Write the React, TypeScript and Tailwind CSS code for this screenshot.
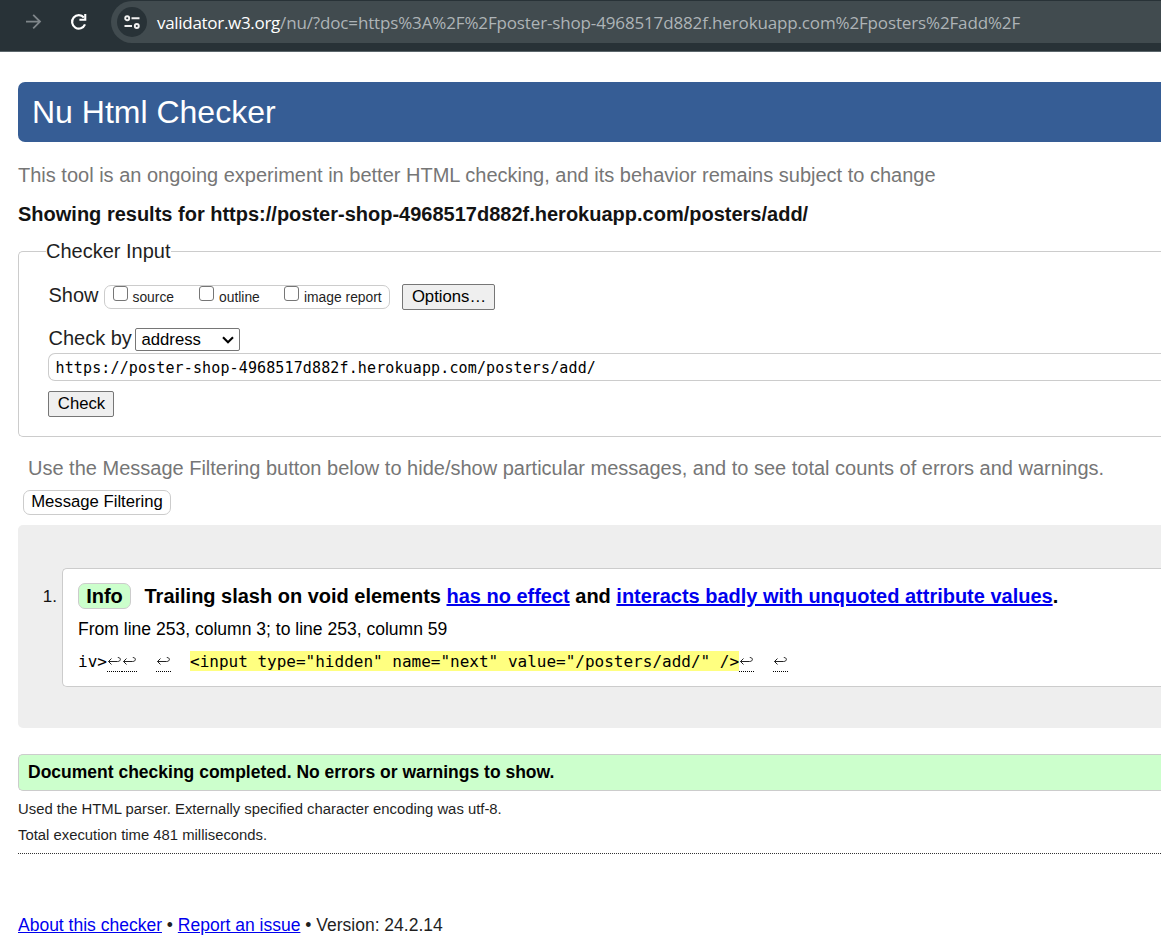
import React from "react";

function Return() {
  return (
    <span className="flex h-[21px] w-[15px] shrink-0 items-start justify-center border-b border-dotted border-black pt-[5px]" title="newline">
      <svg width="15" height="10" viewBox="0 0 15 10" fill="none" stroke="#222" strokeWidth="1">
        <path d="M4.5 2.5 L1.5 5.5 L4.5 8.5 M1.5 5.5 H10.5 C14.3 5.5 14.3 1.5 10.8 1.5" />
      </svg>
    </span>
  );
}

function Check({ label, className }: { label: string; className: string }) {
  return (
    <label className={`flex shrink-0 ${className}`}>
      <input type="checkbox" className="mt-0 mr-[5px] h-[15px] w-[15px] shrink-0 appearance-none rounded-[3px] border-[1.5px] border-[#767676] bg-white" />
      <span className="pt-[1px] text-[13.85px] leading-[20px]">{label}</span>
    </label>
  );
}

export default function App() {
  return (
    <div className="h-[942px] w-full overflow-hidden bg-white font-['Liberation_Sans',Arial,sans-serif] text-[#1f1f1f] whitespace-nowrap">
      <header className="flex h-[52px] items-start border-b border-[#5b666b] bg-[#283237] pt-px">
        <svg className="mt-[12px] ml-[24px] h-[18px] w-[18px] shrink-0" viewBox="0 0 18 18" fill="none" stroke="#7f868a" strokeWidth="1.8">
          <path d="M2 8.6 H16 M9.2 1.8 L16 8.6 L9.2 15.4" />
        </svg>
        <svg className="mt-[12px] ml-[28px] h-[18px] w-[18px] shrink-0" viewBox="0 0 18 18" fill="none" stroke="#fff" strokeWidth="2.2">
          <path d="M15 11.4 A6.7 6.7 0 1 1 13.9 4.5" />
          <path d="M16.3 1 V7.8 H9.4 V5.7 H14.2 V1 Z" fill="#fff" stroke="none" />
        </svg>
        <div className="ml-[23px] flex h-[42px] flex-1 items-center rounded-l-full bg-[#414b4f] pl-[6px]">
          <div className="flex h-[30px] w-[30px] shrink-0 items-center justify-center rounded-full bg-[#283237]">
            <svg width="16" height="16" viewBox="0 0 16 16" fill="none" stroke="#f1f1f1" strokeWidth="1.9">
              <circle cx="3.2" cy="4.2" r="2" />
              <path d="M7.5 4.2 H15.5 M0.5 12 H8" />
              <circle cx="12.8" cy="12" r="2" />
            </svg>
          </div>
          <div className="mt-[2px] ml-[10px] font-['Open_Sans','Noto_Sans',sans-serif] text-[17px] leading-[24px] text-[#aeb4b7]">
            <span className="tracking-[-0.3px] text-white">validator.w3.org</span>
            <span className="tracking-[-0.145px]">/nu/?doc=https%3A%2F%2Fposter-shop-4968517d882f.herokuapp.com%2Fposters%2Fadd%2F</span>
          </div>
        </div>
      </header>
      <main className="pt-[30px] pl-[18px]">
        <h1 className="h-[60px] rounded-l-[7px] bg-[#365d95] pl-[14px] text-[32px] leading-[60px] text-white">Nu Html Checker</h1>
        <p className="mt-[20px] h-[26px] text-[20px] leading-[26px] text-[#767676]">This tool is an ongoing experiment in better HTML checking, and its behavior remains subject to change</p>
        <h2 className="mt-[13px] h-[26px] text-[20px] leading-[26px] font-bold text-[#131313]">Showing results for https://poster-shop-4968517d882f.herokuapp.com/posters/add/</h2>
        <fieldset className="mt-[11px] h-[199px] rounded-l-[5px] border border-r-0 border-[#ccc] pl-[29px]">
          <legend className="-ml-[2px] h-[26px] text-[20px] leading-[26px]">Checker Input</legend>
          <div className="mt-[20px] flex h-[26px]">
            <span className="w-[56px] shrink-0 pl-[0.5px] text-[20px] leading-[22px]">Show</span>
            <div className="mt-px flex h-[24px] w-[286px] shrink-0 rounded-[7px] border border-[#ccc] pl-[7.5px]">
              <Check label="source" className="w-[86.5px]" />
              <Check label="outline" className="w-[85px]" />
              <Check label="image report" className="w-[100px]" />
            </div>
            <button className="ml-[12px] h-[26px] w-[93px] shrink-0 rounded-[2px] border border-[#767676] bg-[#efefef] pl-px text-[16.7px] leading-[24px] text-black">Options…</button>
          </div>
          <div className="mt-[18px] flex h-[23px]">
            <span className="w-[87px] shrink-0 pl-[0.5px] text-[20px] leading-[20px]">Check by</span>
            <div className="flex h-[23px] w-[105px] shrink-0 items-center justify-between rounded-[2px] border border-[#767676] pr-[5px] pl-[5.5px] text-[16.7px] leading-[21px] text-black">
              <span>address</span>
              <svg width="12" height="8" viewBox="0 0 12 8" fill="none" stroke="#000" strokeWidth="2.1"><path d="M1 1.2 L6 6.2 L11 1.2" /></svg>
            </div>
          </div>
          <div className="mt-[2px] h-[28px] rounded-l-[7px] border border-r-0 border-[#ccc] pl-[6.5px] font-['DejaVu_Sans_Mono',monospace] text-[15px] leading-[29px] tracking-[0.13px] text-black">https://poster-shop-4968517d882f.herokuapp.com/posters/add/</div>
          <button className="mt-[10px] block h-[26px] w-[66px] rounded-[2px] border border-[#767676] bg-[#efefef] pb-px pl-px text-[16.7px] leading-[22px] text-black">Check</button>
        </fieldset>
        <p className="mt-[18px] h-[26px] pl-[10px] text-[20px] leading-[26px] text-[#767676]">Use the Message Filtering button below to hide/show particular messages, and to see total counts of errors and warnings.</p>
        <button className="mt-[9px] ml-[5px] block h-[25px] w-[148px] rounded-[7px] border border-[#ccc] bg-white pb-[2px] text-[16.7px] leading-[21px] text-black">Message Filtering</button>
        <section className="mt-[10px] flex h-[203px] rounded-l-[5px] bg-[#eee] pt-[43px]">
          <span className="w-[44px] shrink-0 pt-[17px] pr-[5px] text-right text-[17px] leading-[24px] text-[#131313]">1.</span>
          <div className="h-[119px] flex-1 rounded-l-[5px] border border-r-0 border-[#ccc] bg-white pt-[14px] pl-[15px] text-black">
            <p className="flex h-[26px] text-[20px] leading-[24px] font-bold">
              <span className="mr-[13.5px] w-[53px] shrink-0 rounded-[7px] border border-[#ccc] bg-[#cfc] text-center">Info</span>
              <span className="leading-[26px] tracking-[-0.01px]">Trailing slash on void elements <a className="text-[#00e] underline">has no effect</a> and <a className="text-[#00e] underline">interacts badly with unquoted attribute values</a>.</span>
            </p>
            <p className="mt-[8px] h-[24px] text-[17.55px] leading-[24px]">From line 253, column 3; to line 253, column 59</p>
            <p className="mt-[10px] flex h-[20px] font-['DejaVu_Sans_Mono',monospace] text-[16px] leading-[22px] whitespace-pre">
              <span className="w-[29px] shrink-0">iv&gt;</span>
              <Return /><Return />
              <span className="w-[19px] shrink-0" />
              <Return />
              <span className="w-[19px] shrink-0" />
              <mark className="w-[549px] shrink-0 bg-[#ffff80]">{'<input type="hidden" name="next" value="/posters/add/" />'}</mark>
              <Return />
              <span className="w-[19px] shrink-0" />
              <Return />
            </p>
          </div>
        </section>
        <p className="mt-[26px] h-[37px] rounded-l-[5px] border border-r-0 border-[#ccc] bg-[#cfc] pl-[9px] text-[17.5px] leading-[34px] font-bold text-black">Document checking completed. No errors or warnings to show.</p>
        <p className="mt-[5px] h-[26px] text-[14.85px] leading-[26px]">Used the HTML parser. Externally specified character encoding was utf-8.</p>
        <p className="h-[32px] border-b border-dotted border-[#333] text-[14.85px] leading-[26px]">Total execution time 481 milliseconds.</p>
        <footer className="mt-[58px] h-[26px] text-[17.5px] leading-[26px]">
          <a className="text-[#00e] underline">About this checker</a> • <a className="text-[#00e] underline">Report an issue</a> • Version: 24.2.14
        </footer>
      </main>
    </div>
  );
}
